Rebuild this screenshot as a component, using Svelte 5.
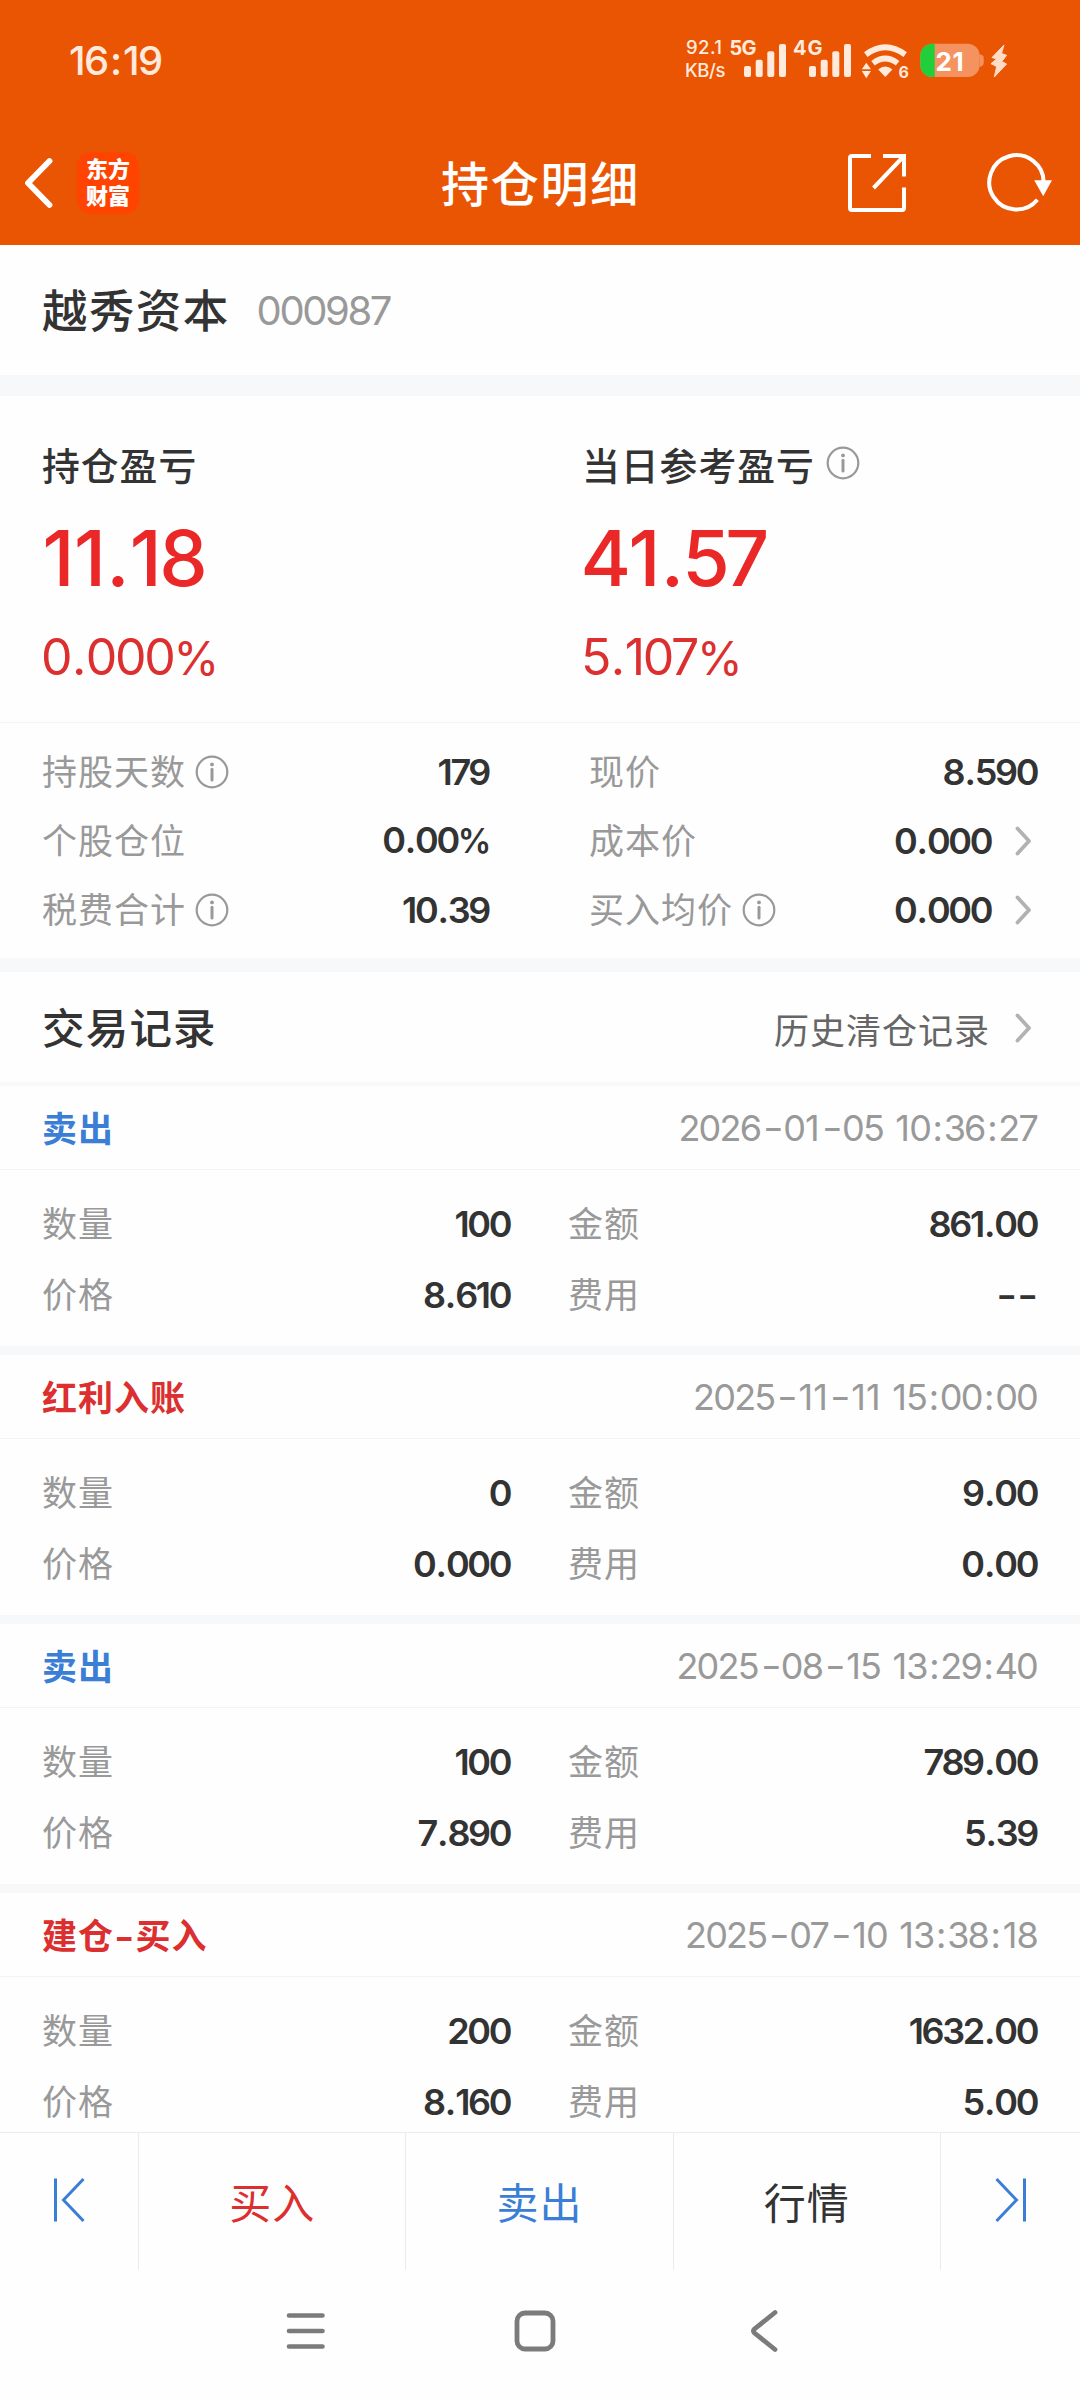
<script>
  const stats = [
    [
      { label: '持股天数', info: true, value: '179' },
      { label: '个股仓位', value: '0.00%' },
      { label: '税费合计', info: true, value: '10.39' }
    ],
    [
      { label: '现价', value: '8.590' },
      { label: '成本价', value: '0.000', link: true },
      { label: '买入均价', info: true, value: '0.000', link: true }
    ]
  ];

  const records = [
    { type: '卖出', tone: 'blue', time: '2026-01-05 10:36:27', qty: '100', amount: '861.00', price: '8.610', fee: '--' },
    { type: '红利入账', tone: 'red', time: '2025-11-11 15:00:00', qty: '0', amount: '9.00', price: '0.000', fee: '0.00' },
    { type: '卖出', tone: 'blue', time: '2025-08-15 13:29:40', qty: '100', amount: '789.00', price: '7.890', fee: '5.39' },
    { type: '建仓-买入', tone: 'red', time: '2025-07-10 13:38:18', qty: '200', amount: '1632.00', price: '8.160', fee: '5.00' }
  ];

  const kinds = { '.': 'dot', ':': 'colon', '-': 'dash', '1': 'one', '%': 'percent' };

  // Splits a figure so that separators and narrow ones get their own side bearings.
  const parts = (text) => text.split(/([.:1%-])/).filter(Boolean);
</script>

{#snippet figure(text)}{#each parts(text) as part}<span class={kinds[part]}>{part}</span>{/each}{/snippet}

{#snippet info()}
  <svg class="info" width="34" height="34" viewBox="0 0 34 34">
    <circle cx="17" cy="17" r="15.3" fill="none" stroke="#999" stroke-width="2.2" />
    <circle cx="17" cy="9.4" r="1.9" fill="#999" />
    <path d="M17 14.2V25" stroke="#999" stroke-width="3" stroke-linecap="round" />
  </svg>
{/snippet}

{#snippet chevron()}
  <svg class="chevron" width="20" height="34" viewBox="0 0 20 34">
    <path d="M3.5 4.5L15 17L3.5 29.5" fill="none" stroke="#b2b2b2" stroke-width="3.8" stroke-linecap="round" stroke-linejoin="round" />
  </svg>
{/snippet}

<div class="screen">
  <header>
    <div class="status">
      <span class="clock">{@render figure('16:19')}</span>
      <svg width="340" height="60" viewBox="0 0 340 60" fill="#ffeadc">
        <text x="6" y="23" font-size="18.5" font-weight="500" textLength="36">92.1</text>
        <text x="5" y="46.3" font-size="18.5" font-weight="500" textLength="40.5">KB/s</text>
        <text x="49.5" y="23.7" font-size="20" font-weight="700" textLength="27">5G</text>
        <text x="113" y="23.7" font-size="20" font-weight="700" textLength="29.5">4G</text>
        {#each [0, 65] as dx}
          <rect x={64 + dx} y="35" width="7" height="11" rx="2" />
          <rect x={75.7 + dx} y="28.7" width="7" height="17.3" rx="2" />
          <rect x={87.3 + dx} y="20.3" width="7" height="25.7" rx="2" />
          <rect x={99 + dx} y="13" width="7" height="33" rx="2" />
        {/each}
        <path d="M185.8 23.6Q205.3 9 225.2 23.6M193 32.2Q205.3 22.9 217.6 32.2" fill="none" stroke="#ffeadc" stroke-width="5.8" />
        <path d="M198.2 38.4Q205.3 32.4 212.4 38.4L205.3 46Z" />
        <path d="M186.3 31.8L191 38.2H181.8ZM186.3 47.2L191 40H181.8Z" />
        <text x="218.5" y="46.6" font-size="16" font-weight="700" textLength="9.5">6</text>
        <rect x="240.3" y="12.7" width="59.4" height="33.4" rx="12" fill="#f4935f" />
        <path d="M299.7 23.3Q303.7 24 303.7 27V32Q303.7 35 299.7 35.7Z" fill="#f4935f" />
        <path d="M254.7 12.7H252.3A12 12 0 0 0 240.3 24.7V34.1A12 12 0 0 0 252.3 46.1H254.7Z" fill="#20cf3a" />
        <text x="255.6" y="40" font-size="26" font-weight="700" fill="#fff" textLength="28">21</text>
        <path d="M324 14L312 26.5L316.5 28L311 32.7L316.7 35.5L314.3 46L326.6 33L321.8 30.6L326.6 24.3L321.5 22.4Z" fill="#ffdcc6" stroke="#ffdcc6" stroke-linejoin="round" />
      </svg>
    </div>
    <div class="navbar">
      <div class="side">
        <svg width="32" height="54" viewBox="0 0 32 54">
          <path d="M27.5 5L6 27L27.5 49" fill="none" stroke="#fff" stroke-width="5.8" stroke-linecap="round" stroke-linejoin="round" />
        </svg>
        <div class="logo"><span>东方</span><span>财富</span></div>
      </div>
      <h1>持仓明细</h1>
      <div class="side right">
        <svg width="60" height="60" viewBox="0 0 60 60" fill="none" stroke="#fff" stroke-width="4">
          <path d="M24 3H5Q3 3 3 5V55Q3 57 5 57H55Q57 57 57 55V34.5" />
          <path d="M36 3H57V23.5M56 4L26.5 35" />
        </svg>
        <svg width="68" height="60" viewBox="0 0 68 60">
          <path d="M58.5 30A27.2 27.2 0 1 0 52.2 46.8" fill="none" stroke="#fff" stroke-width="4" transform="translate(-.8 0)" />
          <path d="M48.2 27.3H66L57.2 43.2Z" fill="#fff" />
        </svg>
      </div>
    </div>
  </header>

  <main>
    <section class="stock">
      <span class="name">越秀资本</span>
      <span class="code">000987</span>
    </section>

    <section class="profit">
      <div>
        <div class="ptitle">持仓盈亏</div>
        <div class="big">{@render figure('11.18')}</div>
        <div class="pct">{@render figure('0.000%')}</div>
      </div>
      <div>
        <div class="ptitle">当日参考盈亏{@render info()}</div>
        <div class="big">{@render figure('41.57')}</div>
        <div class="pct">{@render figure('5.107%')}</div>
      </div>
    </section>

    <section class="stats">
      {#each stats as column}
        <div>
          {#each column as item}
            <div class="stat">
              <span class="label">{item.label}</span>
              {#if item.info}{@render info()}{/if}
              <span class="value">{@render figure(item.value)}</span>
              {#if item.link}{@render chevron()}{/if}
            </div>
          {/each}
        </div>
      {/each}
    </section>

    <section class="history">
      <span class="htitle">交易记录</span>
      <span class="more">历史清仓记录{@render chevron()}</span>
    </section>

    {#each records as r}
      <article>
        <div class="rhead">
          <span class="type {r.tone}">{@render figure(r.type)}</span>
          <span class="time">{@render figure(r.time)}</span>
        </div>
        <div class="rbody">
          <span class="label">数量</span><span class="value">{@render figure(r.qty)}</span>
          <span class="label second">金额</span><span class="value">{@render figure(r.amount)}</span>
          <span class="label">价格</span><span class="value">{@render figure(r.price)}</span>
          <span class="label second">费用</span><span class="value">{@render figure(r.fee)}</span>
        </div>
      </article>
    {/each}
  </main>

  <footer>
    <button class="edge">
      <svg width="34" height="46" viewBox="0 0 34 46" fill="none" stroke="#3a7fd5" stroke-width="3">
        <path d="M3.5 1.5V44.5M31.5 2L11.5 23L31.5 44" />
      </svg>
    </button>
    <button class="red">买入</button>
    <button class="blue">卖出</button>
    <button>行情</button>
    <button class="edge">
      <svg width="34" height="46" viewBox="0 0 34 46" fill="none" stroke="#3a7fd5" stroke-width="3">
        <path d="M30.5 1.5V44.5M2.5 2L22.5 23L2.5 44" />
      </svg>
    </button>
  </footer>

  <nav>
    <svg width="44" height="44" viewBox="0 0 44 44" stroke="#7b7b7b" stroke-width="4.6" stroke-linecap="round">
      <path d="M5 6.5H38.5M5 22H38.5M5 37.5H38.5" />
    </svg>
    <svg width="44" height="44" viewBox="0 0 44 44">
      <rect x="4" y="4" width="36" height="36" rx="8" fill="none" stroke="#7b7b7b" stroke-width="4.8" />
    </svg>
    <svg width="44" height="44" viewBox="0 0 44 44">
      <path d="M33 3.5L12.5 20Q10.5 22 12.5 24L33 40.5" fill="none" stroke="#7b7b7b" stroke-width="4.8" stroke-linecap="round" />
    </svg>
  </nav>
</div>

<style>
  :global(body) {
    margin: 0;
    background: #fff;
  }

  .screen {
    width: 1080px;
    height: 2400px;
    display: flex;
    flex-direction: column;
    overflow: hidden;
    background: #fefefe;
    color: #333;
    font-family: Inter, "Noto Sans CJK SC", sans-serif;
  }

  svg {
    display: block;
    flex: none;
  }

  .dot {
    padding: 0 0.035em;
  }

  .colon {
    padding: 0 0.06em;
  }

  .dash {
    display: inline-block;
    padding: 0 0.09em 0 0.11em;
    transform: scaleX(1.25);
  }

  .percent {
    font-size: 0.93em;
  }

  header {
    flex: none;
    height: 245px;
    background: #ea5504;
    color: #fff;
  }

  .status {
    height: 122px;
    display: flex;
    align-items: center;
    justify-content: space-between;
    padding: 0 60px 0 69px;
    box-sizing: border-box;
  }

  .clock {
    font-size: 40px;
    font-weight: 500;
    color: #ffeadc;
    letter-spacing: -1.6px;
    padding-bottom: 1px;
  }

  .navbar {
    height: 122px;
    display: flex;
    align-items: center;
    justify-content: space-between;
    padding: 0 26px 0 22px;
  }

  .side {
    width: 240px;
    display: flex;
    align-items: center;
    gap: 23px;
  }

  .right {
    justify-content: flex-end;
    gap: 79px;
  }

  .logo {
    width: 62px;
    height: 62px;
    border-radius: 14px;
    background: #ff4402;
    display: flex;
    flex-direction: column;
    align-items: center;
    justify-content: center;
    font-size: 22px;
    line-height: 27px;
    font-weight: 800;
  }

  h1 {
    margin: 0;
    font-size: 48px;
    line-height: 60px;
    font-weight: 500;
    letter-spacing: 1.7px;
    padding: 4px 0 0 5px;
  }

  main {
    flex: none;
    height: 1887px;
    overflow: hidden;
  }

  .stock {
    height: 130px;
    display: flex;
    align-items: center;
    gap: 27px;
    padding: 0 42px 0 42px;
    border-bottom: 21px solid #f6f8fa;
  }

  .name {
    font-size: 45.5px;
    font-weight: 500;
    line-height: 60px;
    letter-spacing: 1.4px;
    padding-top: 3px;
  }

  .code {
    font-size: 40px;
    color: #999;
    letter-spacing: -2.4px;
    padding-top: 1px;
  }

  .profit {
    height: 327px;
    box-sizing: border-box;
    display: grid;
    grid-template-columns: 540px 1fr;
    padding: 37px 42px 0 42px;
    border-bottom: 1px solid #f3f4f5;
  }

  .ptitle {
    display: flex;
    align-items: center;
    gap: 11px;
    height: 60px;
    font-size: 37.8px;
    font-weight: 500;
    letter-spacing: 1px;
  }

  .big {
    margin: 20px 0 0 -1.5px;
    font-size: 77px;
    line-height: 90px;
    font-weight: 500;
    color: #eb2828;
    letter-spacing: -4.5px;
  }

  .big .one {
    padding: 0 2px;
  }

  .pct {
    margin: 21px 0 0 -1px;
    font-size: 50px;
    line-height: 66px;
    color: #dc2f2f;
    letter-spacing: -2.3px;
  }

  .stats {
    height: 235px;
    box-sizing: border-box;
    display: grid;
    grid-template-columns: 450px 451px;
    column-gap: 97px;
    padding: 14px 40px 0 42px;
  }

  .stat {
    height: 69px;
    display: flex;
    align-items: center;
    font-size: 36px;
  }

  .stat .info {
    margin-left: 9px;
  }

  .label {
    font-size: 35px;
    line-height: 50px;
    letter-spacing: 1px;
    color: #999;
  }

  .value {
    margin-left: auto;
    padding-right: 3px;
    font-size: 36px;
    line-height: 50px;
    font-weight: 600;
    letter-spacing: -2.4px;
    text-align: right;
  }

  .stat .chevron {
    margin: 0 6px 0 20px;
  }

  .history {
    height: 110px;
    display: flex;
    align-items: center;
    justify-content: space-between;
    padding: 0 46px 0 42px;
    border-top: 14px solid #f6f8fa;
    border-bottom: 4px solid #f7f8f9;
  }

  .htitle {
    font-size: 42.5px;
    letter-spacing: 1.2px;
    font-weight: 500;
    padding-bottom: 3px;
  }

  .more {
    display: flex;
    align-items: center;
    gap: 24px;
    padding-top: 2px;
    font-size: 35px;
    letter-spacing: 1px;
    color: #666;
  }

  article {
    height: 260px;
    border-bottom: 9px solid #f6f8fa;
  }

  .rhead {
    height: 83px;
    display: flex;
    align-items: center;
    justify-content: space-between;
    padding: 0 43px 0 42px;
    border-bottom: 1px solid #f3f4f5;
    font-size: 36px;
  }

  .type {
    font-size: 35px;
    letter-spacing: 1px;
    font-weight: 700;
    padding-bottom: 3px;
  }

  .type .dash {
    padding: 0 0.06em;
  }

  .time {
    color: #999;
    letter-spacing: -1.8px;
    word-spacing: 3px;
  }

  .time .one {
    padding: 0 1px;
  }

  .time .dash {
    padding: 0 0.1em 0 0.13em;
  }

  .time .colon {
    padding: 0 0.07em;
  }

  .rbody {
    display: grid;
    grid-template-columns: 100px 371px 154px 373px;
    grid-auto-rows: 71px;
    align-items: center;
    padding: 18px 40px 0 42px;
  }

  .second {
    padding-left: 55px;
  }

  .red {
    color: #dc2f2f;
  }

  .blue {
    color: #3a7fd5;
  }

  footer {
    flex: none;
    height: 138px;
    box-sizing: border-box;
    display: grid;
    grid-template-columns: 139px 1fr 1fr 1fr 139px;
    border-top: 1px solid #ebebeb;
  }

  button {
    display: flex;
    align-items: center;
    justify-content: center;
    padding: 0 0 3px;
    border: 0;
    border-right: 1px solid #ebebeb;
    background: none;
    font: 42px Inter, "Noto Sans CJK SC", sans-serif;
    letter-spacing: 1px;
    color: #333;
  }

  button.red {
    color: #dc2f2f;
  }

  button.blue {
    color: #3a7fd5;
  }

  button:last-child {
    border-right: 0;
  }

  button.edge {
    padding: 0 0 4px;
  }

  nav {
    flex: 1;
    display: flex;
    align-items: flex-start;
    justify-content: center;
    gap: 185px;
    padding: 39px 10px 0 0;
  }
</style>
